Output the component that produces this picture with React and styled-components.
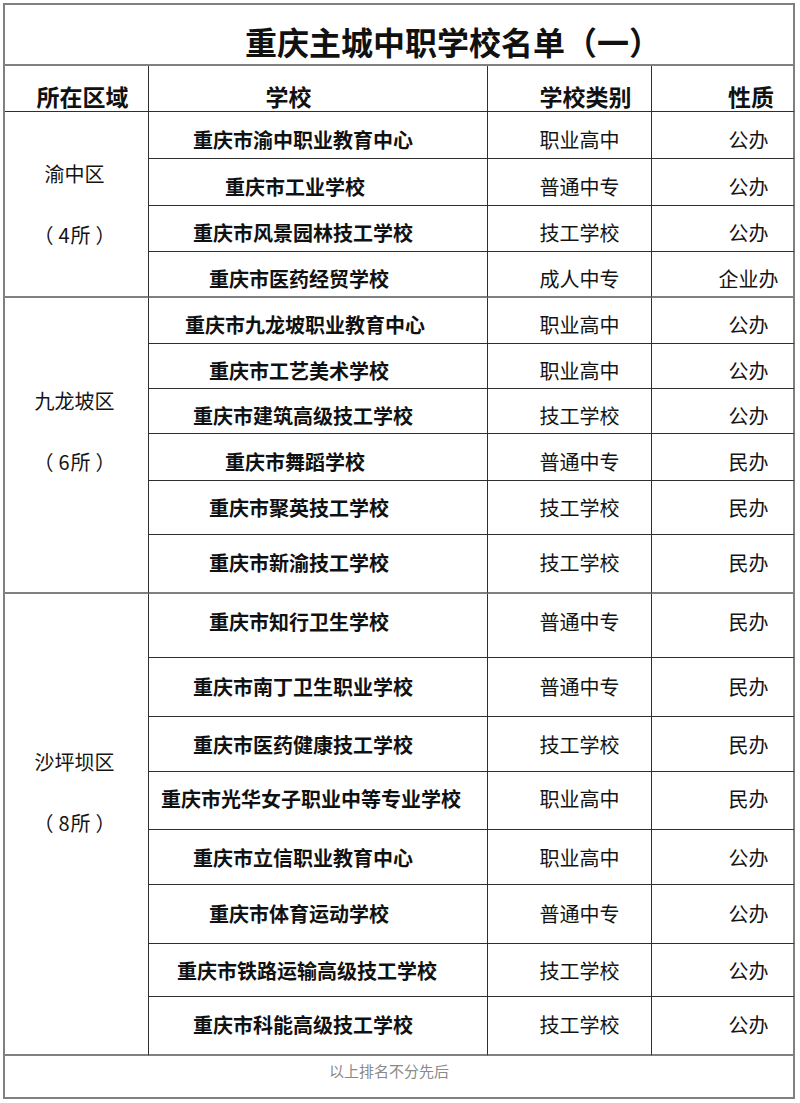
import React from 'react';
import styled, { createGlobalStyle } from 'styled-components';

const GlobalStyle = createGlobalStyle`
  html, body { margin: 0; padding: 0; background: #fff; }
  body {
    font-family: "Noto Sans CJK SC", "Noto Sans", sans-serif;
    color: #141414;
  }
`;

const LINE = '#2f2f2f';
const GRAY = '#808080';

const groups = [
  {
    name: '渝中区', count: '4', lift: 0,
    rows: [
      { name: '重庆市渝中职业教育中心', type: '职业高中', nature: '公办', h: 47, dy: 4 },
      { name: '重庆市工业学校', type: '普通中专', nature: '公办', h: 47, dy: 4 },
      { name: '重庆市风景园林技工学校', type: '技工学校', nature: '公办', h: 46, dy: 4 },
      { name: '重庆市医药经贸学校', type: '成人中专', nature: '企业办', h: 46, dy: 4 },
    ],
  },
  {
    name: '九龙坡区', count: '6', lift: 14,
    rows: [
      { name: '重庆市九龙坡职业教育中心', type: '职业高中', nature: '公办', h: 46, dy: 4 },
      { name: '重庆市工艺美术学校', type: '职业高中', nature: '公办', h: 45, dy: 4 },
      { name: '重庆市建筑高级技工学校', type: '技工学校', nature: '公办', h: 45, dy: 4 },
      { name: '重庆市舞蹈学校', type: '普通中专', nature: '民办', h: 47, dy: 4 },
      { name: '重庆市聚英技工学校', type: '技工学校', nature: '民办', h: 54, dy: 0 },
      { name: '重庆市新渝技工学校', type: '技工学校', nature: '民办', h: 59, dy: -1 },
    ],
  },
  {
    name: '沙坪坝区', count: '8', lift: 32,
    rows: [
      { name: '重庆市知行卫生学校', type: '普通中专', nature: '民办', h: 64, dy: -4 },
      { name: '重庆市南丁卫生职业学校', type: '普通中专', nature: '民办', h: 59, dy: -1 },
      { name: '重庆市医药健康技工学校', type: '技工学校', nature: '民办', h: 55, dy: 0 },
      { name: '重庆市光华女子职业中等专业学校', type: '职业高中', nature: '民办', h: 58, dy: -2 },
      { name: '重庆市立信职业教育中心', type: '职业高中', nature: '公办', h: 55, dy: 0 },
      { name: '重庆市体育运动学校', type: '普通中专', nature: '公办', h: 59, dy: -1 },
      { name: '重庆市铁路运输高级技工学校', type: '技工学校', nature: '公办', h: 53, dy: 0 },
      { name: '重庆市科能高级技工学校', type: '技工学校', nature: '公办', h: 59, dy: -1 },
    ],
  },
];

const Sheet = styled.div`
  display: grid;
  grid-template-columns: 144px 339px 164px 143px;
  width: max-content;
  margin: 3px 0 0 3px;
  border-top: 2px solid ${GRAY};
  border-left: 2px solid ${GRAY};
`;

const Cell = styled.div`
  box-sizing: border-box;
  display: flex;
  align-items: center;
  justify-content: center;
  white-space: nowrap;
  border-right: ${(p) => (p.$last ? `2px solid ${GRAY}` : `1px solid ${LINE}`)};
  border-bottom: ${(p) => (p.$thick ? `2px solid ${GRAY}` : `1px solid ${LINE}`)};
`;

const TitleCell = styled(Cell)`
  grid-column: 1 / -1;
  height: 61px;
  padding: 12px 0 0 108px;
  font-size: 32px;
  font-weight: 700;
  color: #111;
`;

const HeadCell = styled(Cell)`
  height: 46px;
  padding-top: 14px;
  padding-left: ${(p) => p.$pl || 0}px;
  padding-right: ${(p) => p.$pr || 0}px;
  font-size: 23px;
  font-weight: 700;
  color: #111;
`;

const RegionCell = styled(Cell)`
  grid-column: 1;
  grid-row: span ${(p) => p.$span};
  flex-direction: column;
  gap: 35px;
  padding: 0 4px ${(p) => p.$lift * 2}px 0;
  font-size: 20px;
  line-height: 26px;
`;

const Count = styled.span`
  display: inline-flex;
  align-items: center;
`;

const Num = styled.span`
  margin-left: 5px;
  margin-right: 1px;
`;

const Unit = styled.span`
  margin-right: 5px;
`;

const RowCell = styled(Cell)`
  height: ${(p) => p.$h}px;
  padding-top: ${(p) => (p.$dy > 0 ? p.$dy * 2 : 0)}px;
  padding-bottom: ${(p) => (p.$dy < 0 ? -p.$dy * 2 : 0)}px;
  font-size: 20px;
`;

const NameCell = styled(RowCell)`
  grid-column: 2;
  justify-content: flex-start;
  padding-left: ${(p) => p.$indent}px;
  font-weight: 700;
  color: #111;
`;

const TypeCell = styled(RowCell)`
  grid-column: 3;
  padding-left: 20px;
`;

const NatureCell = styled(RowCell)`
  grid-column: 4;
  padding-left: 52px;
`;

const FootCell = styled(Cell)`
  grid-column: 1 / -1;
  height: 43px;
  padding: 0 20px 13px 0;
  font-size: 15px;
  color: #8a8a8a;
`;

export default function App() {
  return (
    <>
      <GlobalStyle />
      <Sheet>
        <TitleCell $last $thick>重庆主城中职学校名单（一）</TitleCell>
        <HeadCell $pl={12}>所在区域</HeadCell>
        <HeadCell $pr={59}>学校</HeadCell>
        <HeadCell $pl={32}>学校类别</HeadCell>
        <HeadCell $pl={57} $last>性质</HeadCell>
        {groups.map((g) => (
          <React.Fragment key={g.name}>
            <RegionCell $span={g.rows.length} $lift={g.lift} $thick>
              <span>{g.name}</span>
              <Count>（<Num>{g.count}</Num><Unit>所</Unit>）</Count>
            </RegionCell>
            {g.rows.map((r, i) => {
              const end = i === g.rows.length - 1;
              const indent = Math.round(133 - 8.1 * r.name.length);
              return (
                <React.Fragment key={r.name}>
                  <NameCell $h={r.h} $dy={r.dy} $indent={indent} $thick={end}>{r.name}</NameCell>
                  <TypeCell $h={r.h} $dy={r.dy} $thick={end}>{r.type}</TypeCell>
                  <NatureCell $h={r.h} $dy={r.dy} $thick={end} $last>{r.nature}</NatureCell>
                </React.Fragment>
              );
            })}
          </React.Fragment>
        ))}
        <FootCell $last $thick>以上排名不分先后</FootCell>
      </Sheet>
    </>
  );
}
